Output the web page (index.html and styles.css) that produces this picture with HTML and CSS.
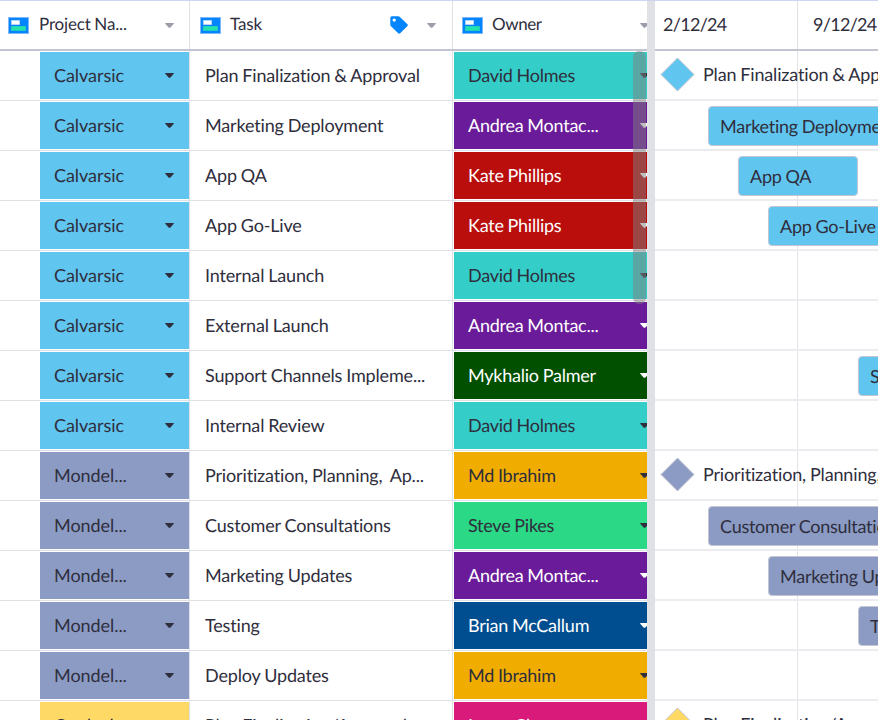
FILE: index.html
```html
<!DOCTYPE html>
<html lang="en">
<head>
  <meta charset="utf-8">
  <title>Project Schedule</title>
  <link rel="stylesheet" href="styles.css">
</head>
<body>
  <svg class="defs" width="0" height="0">
    <symbol id="field" viewBox="0 0 21 17">
      <rect width="21" height="17" fill="#80b8fd"/>
      <rect x="1" y="1" width="19" height="15" fill="#0585fd"/>
      <rect x="3" y="3" width="9" height="5" fill="#80b8fd"/>
      <rect x="3.6" y="3.6" width="7.8" height="3.8" fill="#fff"/>
      <rect x="3" y="9" width="15" height="5" fill="#20b9d2"/>
      <rect x="3.6" y="9.4" width="13.8" height="4" fill="#22e3ac"/>
    </symbol>
    <symbol id="caret" viewBox="0 0 9 5">
      <path d="M0.6 0H8.4Q9.3 0 8.7 0.8L5.7 4.2Q4.5 5.4 3.3 4.2L0.3 0.8Q-0.3 0 0.6 0Z" fill="currentColor"/>
    </symbol>
  </svg>

  <div class="sheet">
    <div class="grid">
      <div class="head">
        <div class="col project"><svg class="field"><use href="#field"/></svg><span>Project Na...</span><svg class="caret"><use href="#caret"/></svg></div>
        <div class="col task"><svg class="field"><use href="#field"/></svg><span>Task</span>
          <svg class="tag" viewBox="0 0 18 18"><path fill-rule="evenodd" d="M1.8 0.2H8.2Q9.2 0.2 9.9 0.9L17.4 8.2Q18.3 9.2 17.4 10.1L10.2 17.3Q9.2 18.2 8.2 17.3L1 10.2Q0.3 9.4 0.3 8.4V1.8Q0.3 0.2 1.8 0.2ZM4.2 2.4A1.7 1.7 0 1 0 4.2 5.8A1.7 1.7 0 1 0 4.2 2.4Z" fill="#0585fd"/></svg>
          <svg class="caret"><use href="#caret"/></svg></div>
        <div class="col owner"><svg class="field"><use href="#field"/></svg><span>Owner</span><svg class="caret"><use href="#caret"/></svg></div>
      </div>
      <div id="rows"></div>
      <div class="scrollbar"></div>
    </div>

    <div class="splitter"></div>

    <div class="gantt">
      <div class="head">
        <div class="week">2/12/24</div>
        <div class="week">9/12/24</div>
      </div>
      <div id="bars"></div>
    </div>
  </div>

  <script src="script.js"></script>
</body>
</html>
```
FILE: styles.css
```css
* {
  box-sizing: border-box;
}

body {
  margin: 0;
  height: 720px;
  overflow: hidden;
  background: #fff;
  color: #2f2e3d;
  font-family: Lato, sans-serif;
  font-size: 18px;
  line-height: 24px;
  letter-spacing: -0.16px;
  word-spacing: -0.5px;
  font-variant-ligatures: none;
  text-rendering: geometricPrecision;
  white-space: nowrap;
}

svg {
  display: block;
  flex: none;
}

.defs {
  position: absolute;
}

.sheet {
  display: flex;
  height: 720px;
  overflow: hidden;
}

.grid {
  position: relative;
  flex: none;
  width: 647px;
  overflow: hidden;
}

.splitter {
  flex: none;
  width: 8px;
  border-top: 1px solid #ced4f0;
  background: #e0e0e7;
}

.gantt {
  flex: none;
  width: 223px;
  overflow: hidden;
}

/* header */
.head {
  display: flex;
  height: 51px;
  border-top: 1px solid #ced4f4;
  border-bottom: 2px solid #c3c5d3;
}

.col {
  display: flex;
  flex: none;
  align-items: center;
  padding-left: 8px;
  border-right: 1px solid #e0e0e7;
  font-size: 17px;
}

.col span {
  padding-bottom: 2px;
}

.project {
  width: 190px;
}

.task {
  width: 263px;
  padding-left: 10px;
}

.owner {
  width: 212px;
  padding-left: 9px;
}

.owner span {
  margin-left: -1px;
  letter-spacing: -0.4px;
}

.field {
  width: 21px;
  height: 17px;
  margin-right: 10px;
}

.task .field {
  margin-right: 9px;
}

.caret {
  width: 9px;
  height: 5px;
  margin-left: auto;
  margin-right: 15px;
  color: #9b9daa;
}

.tag {
  width: 18px;
  height: 18px;
  margin-left: auto;
}

.tag + .caret {
  margin-left: 19px;
  margin-right: 16px;
}

.week {
  flex: none;
  width: 143px;
  padding: 11px 0 0 8px;
  border-right: 1px solid #e0e0e7;
  letter-spacing: -0.7px;
}

.week + .week {
  padding-left: 15px;
}

/* table rows */
.row {
  display: flex;
  height: 50px;
  border-bottom: 1px solid #e0e0e7;
}

.row > div {
  display: flex;
  flex: none;
  align-items: center;
}

.row .name {
  width: 190px;
  padding: 1px 0 1px 40px;
  border-right: 1px solid #e0e0e7;
  letter-spacing: -0.05px;
}

.row .title {
  width: 263px;
  padding: 0 0 1px 15px;
  border-right: 1px solid #e0e0e7;
}

.row .person {
  width: 212px;
  padding: 1px;
  letter-spacing: -0.24px;
}

.chip {
  display: flex;
  flex: 1;
  align-items: center;
  height: 47px;
  padding-left: 14px;
}

.chip span {
  padding-bottom: 2px;
}

.chip .caret {
  color: inherit;
}

.light {
  color: #fff;
}

.scrollbar {
  position: absolute;
  top: 51px;
  right: 1px;
  width: 13px;
  height: 253px;
  border-radius: 6px;
  background: rgba(128, 128, 128, 0.5);
}

/* timeline */
.lane {
  display: flex;
  height: 50px;
  padding-top: 5px;
  border-bottom: 2px solid #ececf0;
  background: linear-gradient(#e3e3e9, #e3e3e9) 142px 0 / 1px 100% no-repeat;
}

.bar {
  flex: none;
  height: 40px;
  padding: 7px 0 0 11px;
  border: 1px solid #c3c5d3;
  border-radius: 4px;
  letter-spacing: -0.25px;
}

.milestone {
  flex: none;
  width: 35px;
  height: 35px;
  margin: 1px 8px 0 5px;
}

.lane span {
  padding-top: 6px;
}

.blue {
  background-color: #60c5ef;
  fill: #60c5ef;
}

.slate {
  background-color: #8b9bc4;
  fill: #8b9bc4;
}

.yellow {
  background-color: #ffd966;
  fill: #ffd966;
}

.milestone {
  background: none;
}

.teal { background: #34cdc8; }
.purple { background: #6a1b9a; }
.red { background: #b90e0c; }
.forest { background: #005000; }
.amber { background: #f0ad00; }
.green { background: #2ad885; }
.navy { background: #004e90; }
.pink { background: #da1a7b; }
```
FILE: script.js
```javascript
// project, colour, task, owner, owner colour, white owner text
const tasks = [
  ["Calvarsic", "blue", "Plan Finalization & Approval", "David Holmes", "teal", false],
  ["Calvarsic", "blue", "Marketing Deployment", "Andrea Montac...", "purple", true],
  ["Calvarsic", "blue", "App QA", "Kate Phillips", "red", true],
  ["Calvarsic", "blue", "App Go-Live", "Kate Phillips", "red", true],
  ["Calvarsic", "blue", "Internal Launch", "David Holmes", "teal", false],
  ["Calvarsic", "blue", "External Launch", "Andrea Montac...", "purple", true],
  ["Calvarsic", "blue", "Support Channels Impleme...", "Mykhalio Palmer", "forest", true],
  ["Calvarsic", "blue", "Internal Review", "David Holmes", "teal", false],
  ["Mondel...", "slate", "Prioritization, Planning, &nbsp;Ap...", "Md Ibrahim", "amber", false],
  ["Mondel...", "slate", "Customer Consultations", "Steve Pikes", "green", false],
  ["Mondel...", "slate", "Marketing Updates", "Andrea Montac...", "purple", true],
  ["Mondel...", "slate", "Testing", "Brian McCallum", "navy", true],
  ["Mondel...", "slate", "Deploy Updates", "Md Ibrahim", "amber", false],
  ["Cardeal", "yellow", "Plan Finalization/Approval", "Laura Chan", "pink", true]
];

// row index -> start offset and width, a width of 0 is a milestone
const schedule = {
  0: [0, 0],
  1: [53, 240],
  2: [83, 120],
  3: [113, 150],
  6: [203, 150],
  8: [0, 0],
  9: [53, 240],
  10: [113, 210],
  11: [203, 150],
  13: [0, 0]
};

const caret = '<svg class="caret"><use href="#caret"/></svg>';

document.getElementById("rows").innerHTML = tasks.map(([project, color, task, owner, ownerColor, light]) => `
  <div class="row">
    <div class="name"><div class="chip ${color}"><span>${project}</span>${caret}</div></div>
    <div class="title">${task}</div>
    <div class="person"><div class="chip ${ownerColor} ${light ? "light" : ""}"><span>${owner}</span>${caret}</div></div>
  </div>`).join("");

document.getElementById("bars").innerHTML = tasks.map(([project, color, task], i) => {
  let item = "";
  if (schedule[i]) {
    const [start, width] = schedule[i];
    item = width
      ? `<div class="bar ${color}" style="margin-left: ${start}px; width: ${width}px">${task}</div>`
      : `<svg class="milestone ${color}" viewBox="0 0 35 35"><path d="M17.5 1L34 17.5L17.5 34L1 17.5Z" stroke="#c3c5d3" stroke-linejoin="round"/></svg><span>${task}</span>`;
  }
  return `<div class="lane">${item}</div>`;
}).join("");
```
